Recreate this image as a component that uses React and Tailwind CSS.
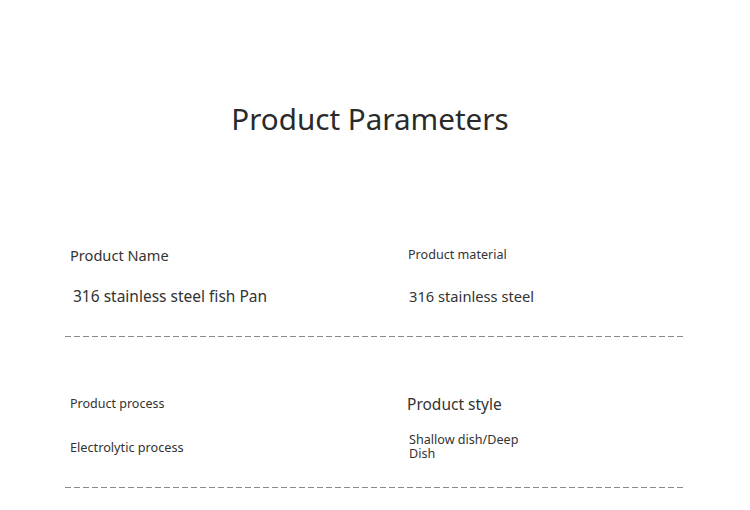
import React from 'react';

const font = 'font-["Noto_Sans","Open_Sans",sans-serif]';

function Dashed() {
  return (
    <div className="h-px w-full bg-[repeating-linear-gradient(to_right,#8a8a8a_0_6px,transparent_6px_9px)]" />
  );
}

export default function App() {
  return (
    <div className={`w-[750px] h-[510px] bg-white text-[#333] ${font}`}>
      {/* Title */}
      <h1 className="pt-[99px] pr-[10px] text-center text-[29.6px] leading-[40px] text-[#2a2a2a]">
        Product Parameters
      </h1>

      <div className="px-[65px] pt-[106px]">
        {/* Row 1 */}
        <div className="flex">
          <div className="w-[338px] pl-[5px]">
            <div className="text-[14.6px] leading-[20px] h-[20px]">Product Name</div>
            <div className="mt-[21px] pl-[3px] text-[15.5px] leading-[20px]">316 stainless steel fish Pan</div>
          </div>
          <div className="pl-[5px]">
            <div className="text-[12.6px] leading-[20px] h-[20px]">Product material</div>
            <div className="mt-[21px] pl-[1px] text-[14.7px] leading-[20px]">316 stainless steel</div>
          </div>
        </div>
        <div className="pt-[30px]">
          <Dashed />
        </div>

        {/* Row 2 */}
        <div className="flex pt-[57px]">
          <div className="w-[337px] pl-[5px]">
            <div className="text-[12.5px] leading-[20px] h-[20px]">Product process</div>
            <div className="mt-[23px] text-[12.7px] leading-[20px]">Electrolytic process</div>
          </div>
          <div className="pl-[5px]">
            <div className="text-[15.5px] leading-[20px] h-[20px]">Product style</div>
            <div className="mt-[19px] pl-[2px] w-[120px] text-[12.6px] leading-[14px]">Shallow dish/Deep Dish</div>
          </div>
        </div>
        <div className="pt-[26px]">
          <Dashed />
        </div>
      </div>
    </div>
  );
}
